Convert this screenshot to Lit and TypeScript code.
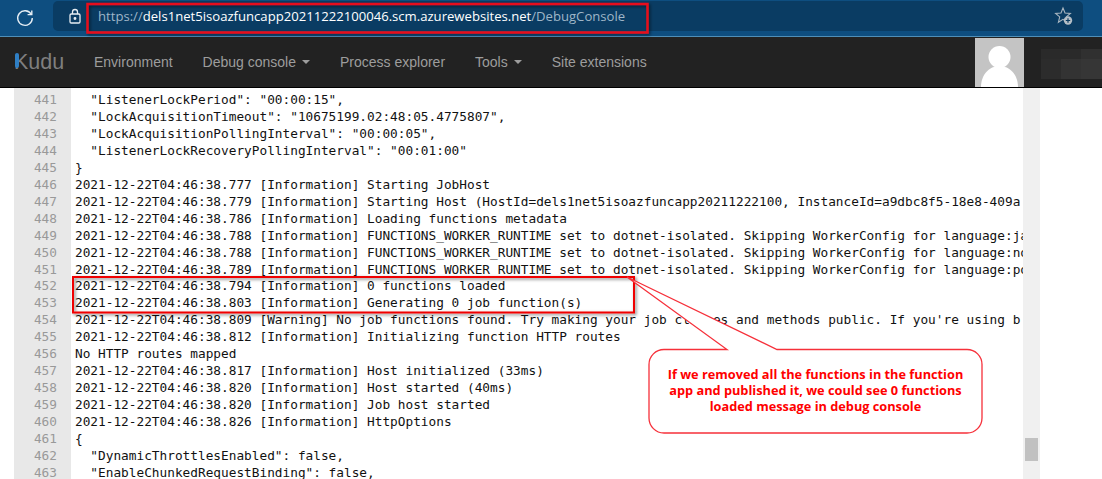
import { LitElement, html, css, svg } from "lit";
import { customElement } from "lit/decorators.js";

const LINES: string[] = [
  '  "ListenerLockPeriod": "00:00:15",',
  '  "LockAcquisitionTimeout": "10675199.02:48:05.4775807",',
  '  "LockAcquisitionPollingInterval": "00:00:05",',
  '  "ListenerLockRecoveryPollingInterval": "00:01:00"',
  "}",
  "2021-12-22T04:46:38.777 [Information] Starting JobHost",
  "2021-12-22T04:46:38.779 [Information] Starting Host (HostId=dels1net5isoazfuncapp20211222100, InstanceId=a9dbc8f5-18e8-409a",
  "2021-12-22T04:46:38.786 [Information] Loading functions metadata",
  "2021-12-22T04:46:38.788 [Information] FUNCTIONS_WORKER_RUNTIME set to dotnet-isolated. Skipping WorkerConfig for language:ja",
  "2021-12-22T04:46:38.788 [Information] FUNCTIONS_WORKER_RUNTIME set to dotnet-isolated. Skipping WorkerConfig for language:no",
  "2021-12-22T04:46:38.789 [Information] FUNCTIONS_WORKER_RUNTIME set to dotnet-isolated. Skipping WorkerConfig for language:po",
  "2021-12-22T04:46:38.794 [Information] 0 functions loaded",
  "2021-12-22T04:46:38.803 [Information] Generating 0 job function(s)",
  "2021-12-22T04:46:38.809 [Warning] No job functions found. Try making your job classes and methods public. If you're using b",
  "2021-12-22T04:46:38.812 [Information] Initializing function HTTP routes",
  "No HTTP routes mapped",
  "2021-12-22T04:46:38.817 [Information] Host initialized (33ms)",
  "2021-12-22T04:46:38.820 [Information] Host started (40ms)",
  "2021-12-22T04:46:38.820 [Information] Job host started",
  "2021-12-22T04:46:38.826 [Information] HttpOptions",
  "{",
  '  "DynamicThrottlesEnabled": false,',
  '  "EnableChunkedRequestBinding": false,',
];

@customElement("app-root")
export class AppRoot extends LitElement {
  static styles = css`
    :host {
      display: block;
      position: relative;
      width: 1102px;
      height: 479px;
      overflow: hidden;
      background: #fff;
      font-family: "Liberation Sans", Arial, sans-serif;
    }
    .chrome {
      height: 36px;
      background: #0e4e80;
      border-bottom: 1px solid #4f8fb8;
      display: flex;
      align-items: center;
    }
    .reload { width: 18px; height: 18px; margin-left: 16px; flex: none; }
    .address {
      margin-left: 19px;
      width: 1030px;
      height: 30px;
      margin-top: -4px;
      flex: none;
      background: #0a3c63;
      border-radius: 5px;
      display: flex;
      align-items: center;
      box-sizing: border-box;
      padding-left: 16px;
    }
    .lock { width: 12px; height: 16px; flex: none; }
    .url {
      margin-left: 17px;
      font-family: "Open Sans", sans-serif;
      font-size: 13.12px;
      color: #fff;
      white-space: nowrap;
    }
    .url span { color: #9fb6c8; }
    .star { width: 20px; height: 20px; margin-left: auto; margin-right: 9px; flex: none; }
    .nav {
      height: 50px;
      background: #222;
      border-bottom: 1px solid #000;
      display: flex;
      align-items: stretch;
    }
    .brand {
      width: 79px;
      flex: none;
      box-sizing: border-box;
      padding-left: 14px;
      display: flex;
      align-items: center;
      font-size: 21.5px;
      color: #7f7f7f;
      position: relative;
    }
    .brand i {
      position: absolute;
      left: 15px;
      top: 16px;
      width: 4px;
      height: 15px;
      border-radius: 2px;
      background: #2f7fc4;
    }
    .item {
      padding: 0 15px;
      display: flex;
      align-items: center;
      font-size: 14px;
      color: #9d9d9d;
      white-space: nowrap;
    }
    .caret {
      display: inline-block;
      margin-left: 6px;
      border-top: 4px solid #9d9d9d;
      border-left: 4px solid transparent;
      border-right: 4px solid transparent;
    }
    .spacer { flex: 1; }
    .avatar {
      width: 49px;
      height: 49px;
      margin-top: 1px;
      flex: none;
      display: block;
    }
    .blur {
      width: 61px;
      margin: 12px 0 8px 17px;
      flex: none;
      display: grid;
      grid-template-columns: 20px 20px 21px;
      grid-template-rows: 10px 20px;
    }
    .blur b:nth-child(1) { background: #2a2a2a; }
    .blur b:nth-child(2) { background: #2a2a2a; }
    .blur b:nth-child(3) { background: #303030; }
    .blur b:nth-child(4) { background: #2c2c2c; }
    .blur b:nth-child(5) { background: #333; }
    .blur b:nth-child(6) { background: #363636; }
    .body { display: flex; height: 391px; padding-left: 14px; }
    .gutter {
      width: 57px;
      flex: none;
      box-sizing: border-box;
      padding: 4px 14px 0 0;
      background: #e8e8e8;
      color: #999;
      text-align: right;
    }
    .code {
      width: 952px;
      flex: none;
      box-sizing: border-box;
      padding: 4px 0 0 4px;
      overflow: hidden;
      color: #111;
    }
    .gutter, .code {
      font-family: "DejaVu Sans Mono", monospace;
      font-size: 12.78px;
      line-height: 16.95px;
      white-space: pre;
    }
    .track {
      width: 17px;
      flex: none;
      background: #f0f0f0;
      box-sizing: border-box;
      padding: 350px 2px 0;
    }
    .thumb { height: 23px; background: #c1c1c1; }
    .overlay { position: absolute; left: 0; top: 0; pointer-events: none; }
    .note {
      position: absolute;
      left: 649px;
      top: 366px;
      width: 333px;
      text-align: center;
      color: #f00;
      font-family: "Open Sans", sans-serif;
      font-weight: 700;
      font-size: 12.75px;
      line-height: 16px;
      white-space: nowrap;
    }
  `;

  render() {
    return html`
      <div class="chrome">
        <svg class="reload" viewBox="0 0 18 18" fill="none" stroke="#e6eef4" stroke-width="1.4">
          <path d="M15.2 5.2A7.3 7.3 0 1 0 16.3 9" />
          <path d="M15.8 1.4v4.2h-4.2" />
        </svg>
        <div class="address">
          <svg class="lock" viewBox="0 0 12 16" fill="none" stroke="#e8eef3" stroke-width="1.3">
            <path d="M3.500 6V4a2.500 2.500 0 0 1 5 0v2" />
            <rect x="1" y="6" width="10" height="9" rx="1.200" />
            <circle cx="6" cy="10.500" r=".8" fill="#e8eef3" />
          </svg>
          <div class="url"><span>https://</span>dels1net5isoazfuncapp20211222100046.scm.azurewebsites.net<span>/DebugConsole</span></div>
          <svg class="star" viewBox="0 0 20 20">
            <path d="M9 2l2 5 5.400.4-4.100 3.500 1.300 5.300L9 13.300 4.400 16.200 5.700 10.900 1.600 7.400 7 7z" fill="none" stroke="#a9b6c0" stroke-width="1.100" />
            <circle cx="14" cy="14.500" r="4.200" fill="#b4bec6" />
            <path d="M14 12.300v4.400M11.800 14.500h4.400" stroke="#0a3c63" stroke-width="1.200" />
          </svg>
        </div>
      </div>
      <div class="nav">
        <div class="brand"><i></i>Kudu</div>
        <div class="item">Environment</div>
        <div class="item">Debug console<span class="caret"></span></div>
        <div class="item">Process explorer</div>
        <div class="item">Tools<span class="caret"></span></div>
        <div class="item">Site extensions</div>
        <div class="spacer"></div>
        <svg class="avatar" viewBox="0 0 49 49">
          <rect width="49" height="49" fill="#c4c4c4" />
          <circle cx="24.500" cy="19" r="11" fill="#fff" />
          <path d="M6 49C6 37 14 28 24.500 28S43 37 43 49z" fill="#fff" />
        </svg>
        <div class="blur"><b></b><b></b><b></b><b></b><b></b><b></b></div>
      </div>
      <div class="body">
        <div class="gutter">${LINES.map((_, i) => html`<div>${441 + i}</div>`)}</div>
        <div class="code">${LINES.map((l) => html`<div>${l}</div>`)}</div>
        <div class="track"><div class="thumb"></div></div>
      </div>
      <svg class="overlay" width="1102" height="479" viewBox="0 0 1102 479">
        <defs>
          <filter id="s" x="-5%" y="-30%" width="110%" height="170%">
            <feDropShadow dx="1.500" dy="1.500" stdDeviation="1.500" flood-color="#000" flood-opacity=".5" />
          </filter>
        </defs>
        <rect x="87.500" y="4" width="560" height="28.500" fill="none" stroke="#e8101c" stroke-width="2.500" filter="url(#s)" />
        <rect x="73" y="277" width="561" height="35.500" fill="none" stroke="#f00000" stroke-width="2" filter="url(#s)" />
        ${svg`<path d="M664 349.500H727L627 277 777 349.500H967a15 15 0 0 1 15 15V418a15 15 0 0 1-15 15H664a15 15 0 0 1-15-15V364.500a15 15 0 0 1 15-15z" fill="#fff" stroke="#f6303a" stroke-width="1.300" />`}
      </svg>
      <div class="note">If we removed all the functions in the function<br />app and published it, we could see 0 functions<br />loaded message in debug console</div>
    `;
  }
}
